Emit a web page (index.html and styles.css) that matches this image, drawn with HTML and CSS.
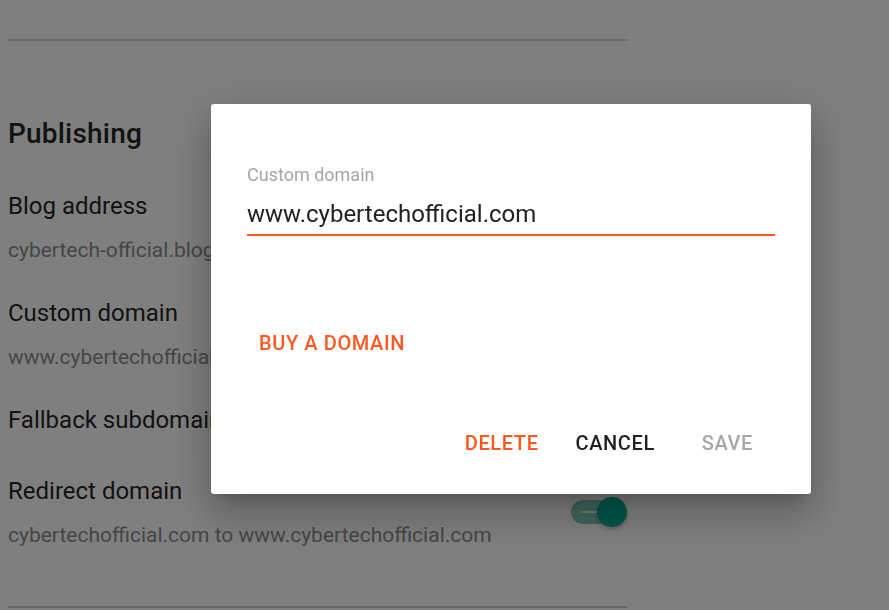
FILE: index.html
```html
<!DOCTYPE html>
<html lang="en">
<head>
<meta charset="utf-8">
<title>Publishing settings</title>
<link rel="stylesheet" href="styles.css">
</head>
<body>
<main class="page">
  <hr class="rule rule-top">
  <h2 class="section-title">Publishing</h2>
  <div class="setting s-blog">
    <div class="setting-title">Blog address</div>
    <div class="setting-sub">cybertech-official.blogspot.com</div>
  </div>
  <div class="setting s-custom">
    <div class="setting-title">Custom domain</div>
    <div class="setting-sub">www.cybertechofficial.com</div>
  </div>
  <div class="setting s-fallback">
    <div class="setting-title">Fallback subdomain</div>
  </div>
  <div class="setting s-redirect row">
    <div class="setting-text">
      <div class="setting-title">Redirect domain</div>
      <div class="setting-sub">cybertechofficial.com to www.cybertechofficial.com</div>
    </div>
    <div class="toggle"><span class="track"><span class="track-line"></span></span><span class="thumb"></span></div>
  </div>
  <hr class="rule rule-bottom">
</main>
<div class="scrim"></div>
<div class="dialog" role="dialog">
  <div class="field">
    <label class="field-label">Custom domain</label>
    <div class="field-input">www.cybertechofficial.com</div>
  </div>
  <div class="buy-row">
    <button class="btn btn-accent">Buy a domain</button>
  </div>
  <div class="actions">
    <button class="btn btn-accent">Delete</button>
    <button class="btn btn-dark">Cancel</button>
    <button class="btn btn-disabled">Save</button>
  </div>
</div>
</body>
</html>
```

FILE: styles.css
```css
* { box-sizing: border-box; }
html, body {
  margin: 0;
  padding: 0;
  background: #ffffff;
  font-family: Roboto, "Noto Sans", "Liberation Sans", sans-serif;
  overflow: hidden;
  height: 610px;
}
.page {
  width: 627px;
  padding-left: 8px;
  padding-top: 39px;
}
.rule {
  border: 0;
  height: 2px;
  background: #cfcfcf;
  margin: 0;
}
.section-title {
  margin: 77px 0 0 0;
  font-size: 28px;
  line-height: 32px;
  font-weight: 500;
  color: #262626;
  letter-spacing: 0.2px;
}
.setting-title {
  font-size: 24px;
  line-height: 28px;
  color: #262626;
}
.setting-sub {
  font-size: 21px;
  line-height: 24px;
  color: #8c8c8c;
  margin-top: 18px;
  white-space: nowrap;
}
.s-blog { margin-top: 42px; }
.s-custom { margin-top: 37px; }
.s-fallback { margin-top: 37px; }
.s-redirect { margin-top: 43px; }
.row {
  display: flex;
  align-items: center;
  justify-content: space-between;
}
.toggle {
  position: relative;
  width: 56px;
  height: 30px;
  display: flex;
  align-items: center;
}
.track {
  width: 40px;
  height: 24px;
  border-radius: 12px;
  background: #80cbc0;
  display: flex;
  align-items: center;
  padding-left: 10px;
}
.track-line {
  width: 16px;
  height: 2px;
  background: #e8f3f1;
}
.thumb {
  position: absolute;
  right: 0;
  top: 0;
  width: 30px;
  height: 30px;
  border-radius: 50%;
  background: #00ae98;
  box-shadow: 0 2px 4px rgba(0,0,0,0.3);
}
.rule-bottom { margin-top: 59px; }

.scrim {
  position: fixed;
  inset: 0;
  background: rgba(0, 0, 0, 0.5);
}
.dialog {
  position: fixed;
  left: 211px;
  top: 104px;
  width: 600px;
  height: 390px;
  background: #ffffff;
  border-radius: 3px;
  box-shadow: 0 11px 15px -7px rgba(0,0,0,0.2), 0 24px 38px 3px rgba(0,0,0,0.14), 0 9px 46px 8px rgba(0,0,0,0.12);
  padding: 61px 36px 0 36px;
  display: flex;
  flex-direction: column;
}
.field-label {
  display: block;
  font-size: 18px;
  line-height: 20px;
  color: #a6a6a6;
}
.field-input {
  margin-top: 15px;
  font-size: 24px;
  line-height: 28px;
  color: #212121;
  padding-bottom: 6px;
  border-bottom: 2px solid #ff5722;
}
.buy-row {
  margin-top: 89px;
}
.btn {
  font-family: Roboto, "Noto Sans", "Liberation Sans", sans-serif;
  background: none;
  border: 0;
  padding: 0 12px;
  height: 36px;
  line-height: 36px;
  font-size: 20px;
  font-weight: 500;
  text-transform: uppercase;
  letter-spacing: 0.6px;
  cursor: pointer;
}
.btn-accent { color: #ff5722; }
.btn-dark { color: #212121; }
.btn-disabled { color: #a6a6a6; }
.actions {
  margin-top: 64px;
  display: flex;
  justify-content: flex-end;
  gap: 13px;
  padding-right: 10px;
}
.actions .btn-disabled { margin-left: 10px; }
```
